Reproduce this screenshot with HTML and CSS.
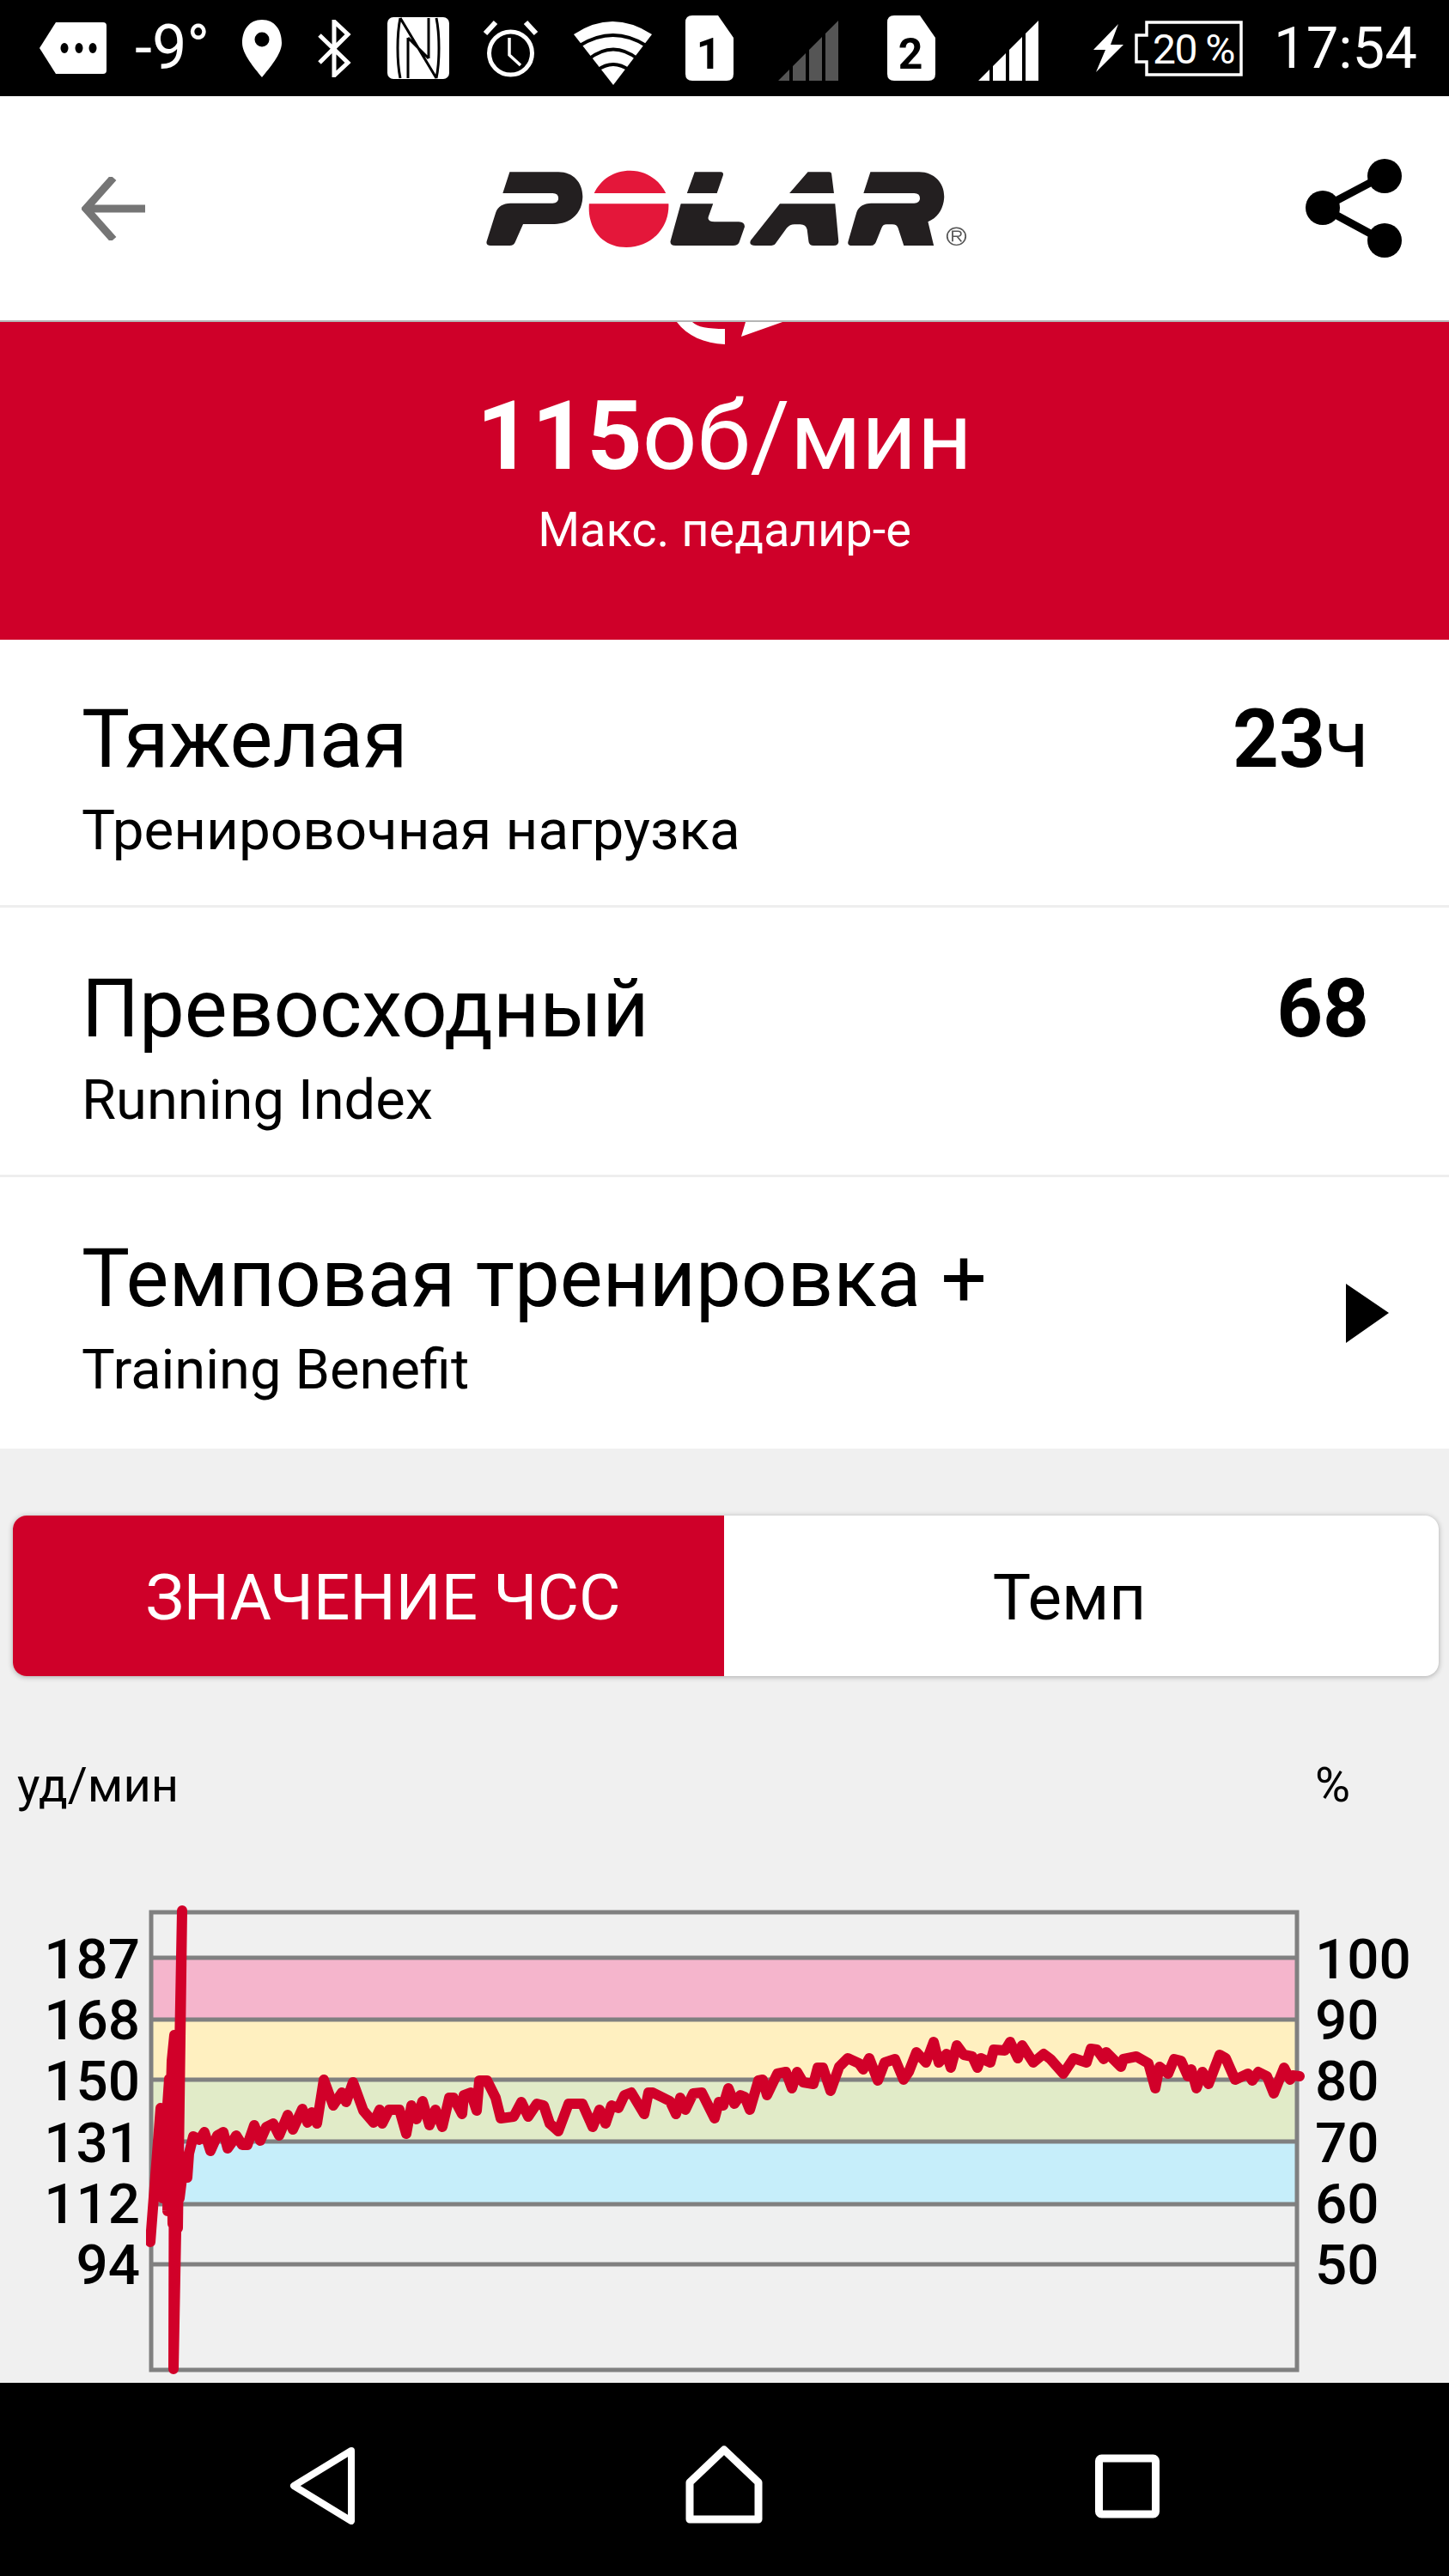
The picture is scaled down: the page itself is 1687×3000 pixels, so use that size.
FILE: index.html
```html
<!DOCTYPE html>
<html>
<head>
<meta charset="utf-8">
<title>Polar training summary</title>
<link rel="stylesheet" href="styles.css">
</head>
<body>
<div class="screen">

  <div class="statusbar">
    <svg class="st-tag" width="78" height="60" viewBox="0 0 78 60"><path fill="#fff" d="M19 0H74Q78 0 78 4V56Q78 60 74 60H19L0 30Z"/><ellipse cx="29" cy="30" rx="4.5" ry="6"/><ellipse cx="46" cy="30" rx="4.5" ry="6"/><ellipse cx="62" cy="30" rx="4.5" ry="6"/></svg>
    <span class="st-temp">-9°</span>
    <svg class="st-pin" width="46" height="67" viewBox="0 0 46 67"><path fill="#fff" d="M23 0C8 0 0 12 0 27C0 40 14 56 23 67C32 56 46 40 46 27C46 12 38 0 23 0Z"/><circle cx="23" cy="23" r="8.5"/></svg>
    <svg class="st-bt" width="40" height="67" viewBox="0 0 40 67"><path fill="none" stroke="#fff" stroke-width="5" d="M3 18L36 50L20 65V2L36 17L3 50"/></svg>
    <svg class="st-nfc" width="72" height="72" viewBox="0 0 72 72"><rect width="72" height="72" rx="7" fill="#fff"/><path fill="none" stroke="#000" stroke-width="3" d="M15 1C11 20 11 52 15 71M57 1C61 20 61 52 57 71M15 1L57 71M24 24V71M48 1V48M24 24L48 48"/></svg>
    <svg class="st-alarm" width="67" height="67" viewBox="0 0 67 67"><circle cx="33.500" cy="39" r="25" fill="none" stroke="#fff" stroke-width="5"/><path fill="none" stroke="#fff" stroke-width="3.500" d="M32 21V41L45 53"/><path fill="none" stroke="#fff" stroke-width="6" d="M4 16L16 3M63 16L51 3"/></svg>
    <svg class="st-wifi" width="91" height="75" viewBox="0 0 91 75"><path fill="#fff" d="M0 16Q45 -14 91 16L46 75Z"/><path fill="none" stroke="#000" stroke-width="4" d="M7 29Q46 5 84 29M17 45Q46 22 75 45M27 58Q46 44 65 58"/></svg>
    <svg class="st-sim1" width="56" height="76" viewBox="0 0 56 76"><path fill="#fff" d="M8 0H38L56 26V68Q56 76 48 76H8Q0 76 0 68V8Q0 0 8 0Z"/><text class="sim-num" x="27" y="62" text-anchor="middle">1</text></svg>
    <svg class="st-sig1" width="70" height="70" viewBox="0 0 70 70"><path fill="#555" d="M0 70L13 57V70ZM17 70V53L32 38V70ZM36 70V34L51 19V70ZM55 70V15L70 0V70Z"/></svg>
    <svg class="st-sim2" width="56" height="76" viewBox="0 0 56 76"><path fill="#fff" d="M8 0H38L56 26V68Q56 76 48 76H8Q0 76 0 68V8Q0 0 8 0Z"/><text class="sim-num" x="27" y="62" text-anchor="middle">2</text></svg>
    <svg class="st-sig2" width="70" height="70" viewBox="0 0 70 70"><path fill="#fff" d="M0 70L13 57V70ZM17 70V53L32 38V70ZM36 70V34L51 19V70ZM55 70V15L70 0V70Z"/></svg>
    <svg class="st-bolt" width="35" height="57" viewBox="0 0 35 57"><path fill="#fff" d="M29 0L0 30H14L3 56L35 24H20Z"/></svg>
    <svg class="st-batt" width="126" height="65" viewBox="0 0 126 65"><path fill="none" stroke="#fff" stroke-width="3.500" d="M14 2H124V63H14V48H2V17H14Z"/><text class="batt-num" x="21" y="50">20 %</text></svg>
    <span class="st-time">17:54</span>
  </div>

  <div class="appbar">
    <svg class="back" width="74" height="74" viewBox="0 0 74 74"><path fill="none" stroke="#757575" stroke-width="9" d="M37 1L5 37L37 73M6 37H74"/></svg>
    <svg class="logo" width="563" height="92" viewBox="140 110 1260 275" preserveAspectRatio="none">
      <path fill="#231f20" d="M208 120H335C375 120 400 160 398 210C396 260 370 300 325 301H243L222 365Q219 376 208 376H158Q146 376 148 362L172 260C178 240 190 230 210 229H320Q335 228 335 212Q335 194 320 194H190Z"/>
      <path fill="#e4173a" d="M428 194C445 145 480 115 522 115C565 115 600 150 615 194ZM415 230H622C625 310 580 382 512 382C450 382 410 320 415 230Z"/>
      <path fill="#231f20" d="M690 120H758Q766 120 764 132L748 194H670ZM654 230H738L726 275Q722 293 742 293H805Q822 295 820 312L806 365Q803 376 790 376H640Q625 376 627 360Z"/>
      <path fill="#231f20" d="M985 120H1040Q1047 120 1047 130L1053 194H937ZM912 230H1056L1065 362Q1065 376 1052 376H1000Q988 376 987 362L983 320Q980 302 965 302H950Q938 302 930 315L900 370Q896 376 885 376H848Q830 376 836 358Z"/>
      <path fill="#231f20" d="M1148 120H1275C1315 120 1342 160 1340 210C1338 250 1322 280 1298 293L1313 376H1235L1220 315Q1217 302 1205 302H1190Q1180 302 1177 315L1162 365Q1159 376 1148 376H1100Q1087 376 1090 362L1112 260C1118 240 1130 230 1150 229H1262Q1277 228 1277 212Q1277 194 1262 194H1130Z"/>
      <ellipse cx="1372" cy="344" rx="24" ry="30" fill="none" stroke="#555" stroke-width="4"/>
      <path fill="none" stroke="#555" stroke-width="4" d="M1362 362V326H1376Q1384 326 1384 335Q1384 344 1374 344H1362M1374 344L1385 362"/>
    </svg>
    <svg class="share" width="113" height="115" viewBox="0 0 113 115"><path fill="none" stroke="#000" stroke-width="9" d="M93 19L21 57L93 96"/><circle cx="93" cy="20" r="20"/><circle cx="21" cy="57" r="20"/><circle cx="93" cy="95" r="20"/></svg>
  </div>

  <div class="hero">
    <svg class="hero-icon" width="124" height="27" viewBox="0 0 124 27"><path fill="#fff" d="M0 0C12 16 32 25 56 26V8C36 8 24 6 18 0ZM75 17L80 0H123Z"/></svg>
    <div class="hero-value"><b>115</b>об/мин</div>
    <div class="hero-label">Макс. педалир-е</div>
  </div>

  <div class="row row-first">
    <div>
      <div class="row-title">Тяжелая</div>
      <div class="row-sub">Тренировочная нагрузка</div>
    </div>
    <div class="row-value"><b>23</b>ч</div>
  </div>
  <div class="row">
    <div>
      <div class="row-title">Превосходный</div>
      <div class="row-sub">Running Index</div>
    </div>
    <div class="row-value"><b>68</b></div>
  </div>
  <div class="row row-last">
    <div>
      <div class="row-title">Темповая тренировка +</div>
      <div class="row-sub">Training Benefit</div>
    </div>
    <svg class="row-arrow" width="50" height="69" viewBox="0 0 50 69"><path d="M0 0L50 34L0 69Z"/></svg>
  </div>

  <div class="lower">
    <div class="toggle">
      <div class="tab tab-on">ЗНАЧЕНИЕ ЧСС</div>
      <div class="tab tab-off">Темп</div>
    </div>

    <div class="units">
      <span>уд/мин</span>
      <span>%</span>
    </div>

    <div class="chart">
      <div class="axis axis-left">
        <div>187</div><div>168</div><div>150</div><div>131</div><div>112</div><div>94</div>
      </div>
      <svg class="plot" width="1350" height="555" viewBox="170 2215 1350 555">
        <rect x="176" y="2280" width="1334" height="72" fill="#f5b5cc"/>
        <rect x="176" y="2352" width="1334" height="70" fill="#fff0c0"/>
        <rect x="176" y="2422" width="1334" height="72" fill="#e1ebc8"/>
        <rect x="176" y="2494" width="1334" height="73" fill="#c6eefa"/>
        <rect x="176" y="2567" width="1334" height="70" fill="#eff0f0"/>
        <path fill="none" stroke="#808080" stroke-width="5" d="M176 2227H1510V2760H176ZM176 2280H1510M176 2352H1510M176 2422H1510M176 2494H1510M176 2567H1510M176 2637H1510"/>
        <polyline fill="none" stroke="#d10029" stroke-width="12" stroke-linejoin="round" stroke-linecap="round" points="175,2611 187,2455 187,2530 189,2560 193,2480 197,2421 195,2575 200,2400 203,2370 202,2759 212,2225 207,2595 205,2370 201,2590 199,2430 209,2560 212,2536 218,2536 220,2508 225,2488 232,2492 238,2483 245,2505 253,2487 260,2483 265,2502 270,2495 275,2487 282,2498 288,2498 296,2475 303,2493 310,2477 318,2473 325,2487 335,2463 341,2480 352,2456 358,2472 363,2460 369,2473 377,2422 388,2452 398,2437 403,2448 411,2425 423,2458 435,2472 442,2457 445,2473 453,2457 465,2457 473,2485 479,2452 485,2468 492,2447 500,2475 507,2457 515,2477 523,2443 528,2443 538,2462 540,2440 548,2437 555,2458 558,2423 567,2423 577,2443 583,2467 598,2465 607,2448 615,2465 625,2450 633,2452 640,2473 650,2482 662,2450 678,2450 690,2477 698,2457 705,2473 712,2452 720,2455 727,2440 735,2437 750,2462 755,2437 760,2437 770,2442 780,2447 787,2462 792,2443 798,2457 807,2438 817,2437 832,2467 837,2448 842,2452 848,2432 855,2450 862,2440 867,2442 873,2457 883,2423 888,2422 893,2440 905,2415 915,2413 922,2432 928,2413 935,2425 947,2427 952,2408 958,2408 967,2435 977,2407 987,2397 1000,2403 1005,2410 1012,2397 1022,2423 1030,2402 1042,2398 1052,2422 1058,2413 1067,2390 1078,2402 1087,2378 1093,2402 1102,2392 1107,2408 1114,2382 1122,2393 1132,2395 1138,2408 1142,2397 1153,2402 1157,2387 1170,2388 1176,2378 1185,2397 1190,2382 1203,2402 1215,2392 1223,2398 1238,2415 1250,2397 1265,2402 1270,2386 1277,2387 1285,2398 1288,2390 1305,2407 1308,2398 1323,2395 1337,2403 1345,2432 1350,2407 1360,2415 1367,2398 1375,2400 1383,2418 1387,2410 1393,2432 1400,2413 1407,2427 1420,2393 1427,2397 1438,2422 1453,2415 1458,2423 1465,2413 1475,2418 1483,2438 1495,2408 1502,2422 1505,2417 1513,2418"/>
      </svg>
      <div class="axis axis-right">
        <div>100</div><div>90</div><div>80</div><div>70</div><div>60</div><div>50</div>
      </div>
    </div>
  </div>

  <div class="navbar">
    <svg class="nav-back" width="78" height="90" viewBox="0 0 78 90"><path fill="none" stroke="#fff" stroke-width="8" stroke-linejoin="round" d="M72 4L5 45L72 86Z"/></svg>
    <svg class="nav-home" width="90" height="92" viewBox="0 0 90 92"><path fill="none" stroke="#fff" stroke-width="9" stroke-linejoin="round" d="M45 6L5 44V87H85V44Z"/></svg>
    <svg class="nav-square" width="75" height="75" viewBox="0 0 75 75"><rect x="4.500" y="5" width="66" height="65" rx="3" fill="none" stroke="#fff" stroke-width="9"/></svg>
  </div>

</div>
</body>
</html>
```

FILE: styles.css
```css
html, body { margin: 0; padding: 0; }
body { font-family: Roboto, "Noto Sans", sans-serif; color: #000; background: #f0f0f0; }
svg { display: block; flex: none; }

.screen {
  width: 1687px;
  height: 3000px;
  overflow: hidden;
  display: flex;
  flex-direction: column;
}

/* status bar */
.statusbar {
  height: 112px;
  background: #000;
  color: #fff;
  display: flex;
  align-items: center;
  padding-left: 46px;
  flex: none;
}
.st-tag { margin-right: 33px; }
.st-temp { font-size: 72px; width: 125px; line-height: 112px; }
.st-bt { margin-left: 41px; }
.st-nfc { margin-left: 42px; }
.st-alarm { margin-left: 38px; }
.st-wifi { margin-left: 40px; margin-top: 10px; }
.st-sim1 { margin-left: 39px; }
.st-sig1 { margin-left: 52px; margin-top: 6px; }
.st-sim2 { margin-left: 57px; }
.st-sig2 { margin-left: 50px; margin-top: 6px; }
.st-bolt { margin-left: 64px; }
.st-batt { margin-left: 13px; }
.st-time { margin-left: 36px; font-size: 67px; line-height: 112px; }
.sim-num { font-family: Roboto, sans-serif; font-size: 50px; font-weight: 700; fill: #000; }
.batt-num { font-family: Roboto, sans-serif; font-size: 48px; letter-spacing: -1.5px; fill: #fff; }

/* app bar */
.appbar {
  height: 261px;
  background: #fff;
  border-bottom: 2px solid #b5b5b5;
  display: flex;
  align-items: center;
  padding-left: 95px;
  flex: none;
}
.logo { margin-left: 394px; }
.share { margin-left: 393px; }

/* red block */
.hero {
  height: 370px;
  background: #cf0029;
  color: #fff;
  display: flex;
  flex-direction: column;
  align-items: center;
  flex: none;
}
.hero-icon { margin-left: 12px; }
.hero-value { font-size: 112px; line-height: 130px; margin-top: 41px; }
.hero-label { font-size: 56px; line-height: 66px; margin-top: 11px; }

/* result rows */
.row {
  height: 314px;
  box-sizing: border-box;
  background: #fff;
  border-bottom: 3px solid #eeeeee;
  display: flex;
  justify-content: space-between;
  align-items: flex-start;
  padding: 70px 93px 0 95px;
  flex: none;
}
.row-first { height: 312px; padding-top: 68px; }
.row-last { height: 316px; border-bottom: 0; }
.row-title { font-size: 94px; line-height: 96px; }
.row-sub { font-size: 65px; line-height: 72px; margin-top: 22px; }
.row-first .row-sub { font-size: 65.600px; }
.row-value { font-size: 94px; line-height: 96px; }
.row-value b { font-weight: 700; }
.row-arrow { margin: 54px -23px 0 0; }

/* chart part */
.lower { flex: 1; min-height: 0; overflow: hidden; }
.toggle {
  margin: 78px 12px 0 15px;
  height: 187px;
  display: flex;
  border-radius: 16px;
  background: #fff;
  box-shadow: 0 1px 6px rgba(0, 0, 0, 0.3);
  overflow: hidden;
}
.tab {
  font-size: 74.500px;
  line-height: 191px;
  text-align: center;
  box-sizing: border-box;
}
.tab-on { width: 828px; background: #cf0029; color: #fff; padding-left: 34px; }
.tab-off { flex: 1; padding-right: 28px; }

.units {
  display: flex;
  justify-content: space-between;
  margin-top: 94px;
  padding: 0 115px 0 20px;
  font-size: 56px;
  line-height: 66px;
}
.chart { display: flex; margin-top: 103px; }
.axis { font-size: 65.600px; font-weight: 500; line-height: 71.200px; padding-top: 31px; }
.axis-left { width: 163px; text-align: right; margin-right: 7px; }
.axis-right { margin-left: 11px; }

/* nav bar */
.navbar {
  height: 225px;
  background: #000;
  display: flex;
  align-items: flex-start;
  padding: 72px 0 0 337px;
  box-sizing: border-box;
  flex: none;
}
.nav-back { margin-top: 3px; }
.nav-home { margin-left: 383px; }
.nav-square { margin-left: 387px; margin-top: 11px; }
```
